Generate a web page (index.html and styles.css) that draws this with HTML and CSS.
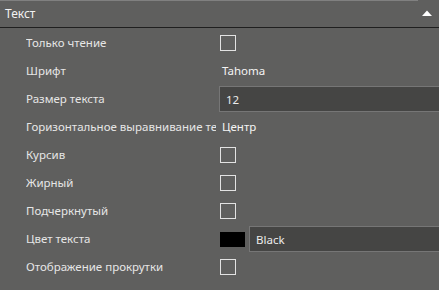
FILE: index.html
```html
<!DOCTYPE html>
<html>
<head>
<meta charset="utf-8">
<link rel="stylesheet" href="styles.css">
</head>
<body>
<div class="topline"></div>
<div class="header">
  <span class="title">Текст</span>
  <svg class="caret" width="10" height="6" viewBox="0 0 10 6"><polygon points="0,6 5,0.5 10,6" fill="#ffffff"/></svg>
</div>
<div class="sep"></div>
<div class="rows">
  <div class="row"><div class="label">Только чтение</div><div class="value"><span class="cb"></span></div></div>
  <div class="row"><div class="label">Шрифт</div><div class="value"><span class="txt">Tahoma</span></div></div>
  <div class="row"><div class="label">Размер текста</div><div class="value"><div class="input">12</div></div></div>
  <div class="row"><div class="label">Горизонтальное выравнивание текста</div><div class="value"><span class="txt">Центр</span></div></div>
  <div class="row"><div class="label">Курсив</div><div class="value"><span class="cb"></span></div></div>
  <div class="row"><div class="label">Жирный</div><div class="value"><span class="cb"></span></div></div>
  <div class="row"><div class="label">Подчеркнутый</div><div class="value"><span class="cb"></span></div></div>
  <div class="row"><div class="label">Цвет текста</div><div class="value"><span class="swatch"></span><div class="input color-input">Black</div></div></div>
  <div class="row"><div class="label">Отображение прокрутки</div><div class="value"><span class="cb"></span></div></div>
</div>
</body>
</html>
```
FILE: styles.css
```css
html, body {
  margin: 0;
  padding: 0;
  width: 439px;
  height: 290px;
  overflow: hidden;
  background: #5f5f5e;
  font-family: "Noto Sans", "Open Sans", sans-serif;
  font-size: 11.5px;
  color: #ececec;
}
.topline {
  height: 1px;
  width: 418px;
  background: #808080;
}
.header {
  height: 26px;
  display: flex;
  align-items: center;
  justify-content: space-between;
  padding: 0 7px 0 5px;
  background: #5f5f5e;
}
.title {
  font-size: 12px;
  color: #f2f2f2;
  margin-top: -1px;
}
.caret {
  display: block;
  margin-top: -2px;
}
.sep {
  height: 1px;
  background: #1f1f1f;
}
.rows {
  display: flex;
  flex-direction: column;
  padding-top: 1px;
}
.row {
  height: 28px;
  display: flex;
  align-items: center;
}
.label {
  width: 190px;
  margin-left: 26px;
  flex: none;
  white-space: nowrap;
  overflow: hidden;
  color: #e6e6e6;
  margin-top: -1px;
}
.value {
  flex: 1;
  display: flex;
  align-items: center;
  padding-left: 3px;
  height: 100%;
}
.cb {
  width: 14px;
  height: 14px;
  border: 1px solid #e2e2e2;
  margin-left: 1px;
}
.txt {
  color: #f4f4f4;
  padding-left: 3px;
  margin-top: -1px;
}
.input {
  flex: 1;
  height: 24px;
  border: 1px solid #767676;
  border-right: none;
  background: #454544;
  display: flex;
  align-items: center;
  padding-left: 6px;
  color: #ececec;
}
.swatch {
  width: 25px;
  height: 15px;
  background: #000;
  margin-left: 1px;
  margin-right: 4px;
  flex: none;
}
.color-input {
  padding-left: 6px;
}
```
